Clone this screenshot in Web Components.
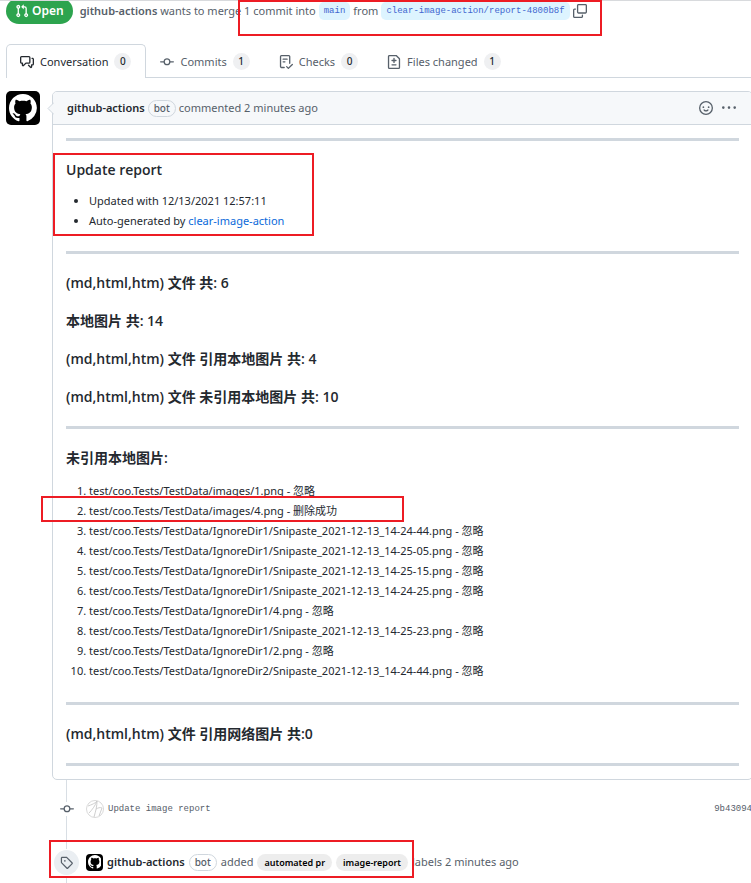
<!DOCTYPE html>
<html lang="en">
<head>
<meta charset="utf-8">
<title>Update image report</title>
<style>
  body {
    margin: 0;
    overflow-x: hidden;
    background: #fff;
    color: #24292f;
    font: 11px/18px "Noto Sans", "Noto Sans CJK SC", sans-serif;
  }
</style>
</head>
<body>
<pr-page></pr-page>
<script>
const ICONS = {
  pull: 'M7.177 3.073L9.573.677A.25.25 0 0110 .854v4.792a.25.25 0 01-.427.177L7.177 3.427a.25.25 0 010-.354zM3.75 2.5a.75.75 0 100 1.5.75.75 0 000-1.5zm-2.25.75a2.25 2.25 0 113 2.122v5.256a2.251 2.251 0 11-1.5 0V5.372A2.25 2.25 0 011.5 3.25zM11 2.5h-1V4h1a1 1 0 011 1v5.628a2.251 2.251 0 101.5 0V5A2.5 2.5 0 0011 2.5zm1 10.25a.75.75 0 111.5 0 .75.75 0 01-1.5 0zM3.75 12a.75.75 0 100 1.5.75.75 0 000-1.5z',
  talk: 'M1.5 2.75a.25.25 0 01.25-.25h8.5a.25.25 0 01.25.25v5.5a.25.25 0 01-.25.25h-3.5a.75.75 0 00-.53.22L3.5 11.44V9.25a.75.75 0 00-.75-.75h-1a.25.25 0 01-.25-.25v-5.5zM1.75 1A1.75 1.75 0 000 2.75v5.5C0 9.216.784 10 1.75 10H2v1.543a1.457 1.457 0 002.487 1.03L7.061 10h3.189A1.75 1.75 0 0012 8.25v-5.5A1.75 1.75 0 0010.25 1h-8.5zM14.5 4.75a.25.25 0 00-.25-.25h-.5a.75.75 0 110-1.5h.5c.966 0 1.75.784 1.75 1.75v5.5A1.75 1.75 0 0114.25 12H14v1.543a1.457 1.457 0 01-2.487 1.03L9.22 12.28a.75.75 0 111.06-1.06l2.22 2.22v-2.19a.75.75 0 01.75-.75h1a.25.25 0 00.25-.25v-5.5z',
  commit: 'M10.5 7.75a2.5 2.5 0 11-5 0 2.5 2.5 0 015 0zm1.43.75a4.002 4.002 0 01-7.86 0H.75a.75.75 0 110-1.5h3.32a4.001 4.001 0 017.86 0h3.32a.75.75 0 110 1.5h-3.32z',
  checks: 'M2.5 1.75a.25.25 0 01.25-.25h8.5a.25.25 0 01.25.25v7.736a.75.75 0 101.5 0V1.75A1.75 1.75 0 0011.25 0h-8.5A1.75 1.75 0 001 1.75v11.5c0 .966.784 1.75 1.75 1.75h3.17a.75.75 0 000-1.5H2.75a.25.25 0 01-.25-.25V1.75zM4.75 4a.75.75 0 000 1.5h4.5a.75.75 0 000-1.5h-4.5zM4 7.75A.75.75 0 014.75 7h2a.75.75 0 010 1.5h-2A.75.75 0 014 7.75zm11.774 3.537a.75.75 0 00-1.048-1.074L10.7 14.145 9.281 12.72a.75.75 0 00-1.062 1.058l1.943 1.95a.75.75 0 001.055.008l4.557-4.45z',
  diff: 'M2.75 1.5a.25.25 0 00-.25.25v12.5c0 .138.112.25.25.25h10.5a.25.25 0 00.25-.25V4.664a.25.25 0 00-.073-.177l-2.914-2.914a.25.25 0 00-.177-.073H2.75zM1 1.75C1 .784 1.784 0 2.75 0h7.586c.464 0 .909.184 1.237.513l2.914 2.914c.329.328.513.773.513 1.237v9.586A1.75 1.75 0 0113.25 16H2.75A1.75 1.75 0 011 14.25V1.75zm7 1.5a.75.75 0 01.75.75v1.5h1.5a.75.75 0 010 1.5h-1.5v1.5a.75.75 0 01-1.5 0V7h-1.5a.75.75 0 010-1.5h1.5V4A.75.75 0 018 3.25zm-3 8a.75.75 0 01.75-.75h4.5a.75.75 0 010 1.5h-4.5a.75.75 0 01-.75-.75z',
  smiley: 'M1.5 8a6.5 6.5 0 1113 0 6.5 6.5 0 01-13 0zM8 0a8 8 0 100 16A8 8 0 008 0zM5 8a1 1 0 100-2 1 1 0 000 2zm7-1a1 1 0 11-2 0 1 1 0 012 0zM5.32 9.636a.75.75 0 011.038.175c.103.118.227.231.357.319.264.178.683.37 1.285.37.602 0 1.02-.192 1.285-.371.13-.088.247-.192.35-.31a.75.75 0 111.229.862c-.06.08-.13.16-.2.23-.16.166-.338.316-.53.445-.63.418-1.37.638-2.127.629-.946 0-1.652-.308-2.126-.63a3.32 3.32 0 01-.73-.68.75.75 0 01.169-1.039z',
  dots: 'M8 9a1.5 1.5 0 100-3 1.5 1.5 0 000 3zM1.5 9a1.5 1.5 0 100-3 1.5 1.5 0 000 3zm13 0a1.5 1.5 0 100-3 1.5 1.5 0 000 3z',
  tag: 'M2.5 7.775V2.75a.25.25 0 01.25-.25h5.025a.25.25 0 01.177.073l6.25 6.25a.25.25 0 010 .354l-5.025 5.025a.25.25 0 01-.354 0l-6.25-6.25a.25.25 0 01-.073-.177zm-1.5 0V2.75C1 1.784 1.784 1 2.75 1h5.025c.464 0 .91.184 1.238.513l6.25 6.25a1.75 1.75 0 010 2.474l-5.026 5.026a1.75 1.75 0 01-2.474 0l-6.25-6.25A1.75 1.75 0 011 7.775zM6 5a1 1 0 100 2 1 1 0 000-2z',
  copy: 'M6.25 0C5.28 0 4.5.78 4.5 1.75v7.5c0 .97.78 1.75 1.75 1.75h8c.97 0 1.75-.78 1.75-1.75v-7.5C16 .78 15.22 0 14.25 0zm0 1.5h8a.25.25 0 01.25.25v7.5a.25.25 0 01-.25.25h-8A.25.25 0 016 9.25v-7.5a.25.25 0 01.25-.25zM1.75 5A1.75 1.75 0 000 6.75v7.5C0 15.22.78 16 1.75 16h8c.97 0 1.75-.78 1.75-1.75v-1.5a.75.75 0 00-1.5 0v1.5a.25.25 0 01-.25.25h-8a.25.25 0 01-.25-.25v-7.5a.25.25 0 01.25-.25h1a.75.75 0 000-1.5z',
  mark: 'M8 0C3.58 0 0 3.58 0 8c0 3.54 2.29 6.53 5.47 7.59.4.07.55-.17.55-.38 0-.19-.01-.82-.01-1.49-2.01.37-2.53-.49-2.69-.94-.09-.23-.48-.94-.82-1.13-.28-.15-.68-.52-.01-.53.63-.01 1.08.58 1.23.82.72 1.21 1.87.87 2.33.66.07-.52.28-.87.51-1.07-1.78-.2-3.64-.89-3.64-3.95 0-.87.31-1.59.82-2.15-.08-.2-.36-1.02.08-2.12 0 0 .67-.21 2.2.82.64-.18 1.32-.27 2-.27.68 0 1.36.09 2 .27 1.53-1.04 2.2-.82 2.2-.82.44 1.1.16 1.92.08 2.12.51.56.82 1.27.82 2.15 0 3.07-1.87 3.75-3.65 3.95.29.25.54.73.54 1.48 0 1.07-.01 1.93-.01 2.2 0 .21.15.46.55.38A8.013 8.013 0 0016 8c0-4.42-3.58-8-8-8z'
};

function define(name, html) {
  const t = document.createElement('template');
  t.innerHTML = html;
  customElements.define(name, class extends HTMLElement {
    constructor() {
      super();
      this.attachShadow({ mode: 'open' }).append(t.content.cloneNode(true));
    }
  });
}

class GlyphIcon extends HTMLElement {
  constructor() { super(); this.attachShadow({ mode: 'open' }); }
  connectedCallback() {
    this.shadowRoot.innerHTML = `<style>
      :host { display: block; flex: none; width: 14px; height: 14px; }
      svg { display: block; width: 100%; height: 100%; fill: currentColor; }
    </style><svg viewBox="0 0 16 16" aria-hidden="true"><path fill-rule="evenodd" d="${ICONS[this.getAttribute('name')]}"/></svg>`;
  }
}
customElements.define('glyph-icon', GlyphIcon);

define('cat-avatar', `<style>
  :host { display: flex; flex: none; align-items: center; justify-content: center; width: 34px; height: 34px; border-radius: 5px; background: #000; color: #fff; }
  glyph-icon { width: 82%; height: 82%; }
</style><glyph-icon name="mark"></glyph-icon>`);

/* Red outline laid over the part of the page it points out. */
define('red-mark', `<style>
  :host { position: absolute; z-index: 2; box-sizing: border-box; border: 2px solid #ed1c24; pointer-events: none; }
</style>`);

define('bot-badge', `<style>
  :host { display: block; flex: none; box-sizing: border-box; height: 17px; padding: 0 5px; border: 1px solid #d0d7de; border-radius: 9px; color: #57606a; font-size: 10px; font-weight: 500; line-height: 15px; }
</style><slot></slot>`);

define('branch-name', `<style>
  :host { display: block; flex: none; }
  a { display: block; padding: 0 5px; border-radius: 5px; background: #ddf4ff; color: #3f66cf; font: 9px/18px "Liberation Mono", monospace; text-decoration: none; }
</style><a href="#"><slot></slot></a>`);

define('pr-header', `<style>
  :host { display: flex; align-items: flex-end; position: relative; box-sizing: border-box; height: 24px; padding-left: 6px; border-top: 1px solid #d8dadd; color: #57606a; white-space: nowrap; }
  .clip { display: flex; align-items: flex-end; height: 23px; overflow: hidden; }
  .state { display: flex; align-items: center; gap: 3px; height: 26px; padding: 0 9px; border-radius: 13px; background: #2da44e; color: #fff; font-size: 12px; font-weight: 600; }
  .meta { display: flex; align-items: center; gap: 3px; height: 26px; margin-left: 7px; }
  b { font-weight: 600; }
  button { padding: 0; border: 0; background: none; color: #57606a; }
  red-mark { left: 238px; top: -1px; width: 364px; height: 36px; }
</style>
<div class="clip"><span class="state"><glyph-icon name="pull"></glyph-icon>Open</span></div>
<div class="meta"><span><b>github-actions</b> wants to merge 1 commit into</span>
<branch-name>main</branch-name><span>from</span><branch-name>clear-image-action/report-4800b8f</branch-name>
<button aria-label="Copy branch name"><glyph-icon name="copy"></glyph-icon></button></div>
<red-mark></red-mark>`);

class PrTab extends HTMLElement {
  constructor() { super(); this.attachShadow({ mode: 'open' }); }
  connectedCallback() {
    this.shadowRoot.innerHTML = `<style>
      :host { display: block; margin-bottom: -1px; }
      a { display: flex; align-items: center; gap: 6px; box-sizing: border-box; height: 34px; padding: 0 14px 0 13px; border: 1px solid transparent; border-bottom: 0; border-radius: 5px 5px 0 0; color: #57606a; text-decoration: none; white-space: nowrap; }
      :host([current]) a { border-color: #d0d7de; background: #fff; color: #24292f; }
      .count { min-width: 17px; height: 17px; border-radius: 9px; background: #eff0f2; color: #24292f; font-size: 10px; font-weight: 500; line-height: 17px; text-align: center; }
    </style><a href="#"><glyph-icon name="${this.getAttribute('icon')}"></glyph-icon><slot></slot><span class="count">${this.getAttribute('count')}</span></a>`;
  }
}
customElements.define('pr-tab', PrTab);

define('pr-tabs', `<style>
  :host { display: block; margin: 20px 0 13px 6px; }
  nav { display: flex; border-bottom: 1px solid #d0d7de; }
</style><nav>
<pr-tab icon="talk" count="0" current>Conversation</pr-tab>
<pr-tab icon="commit" count="1">Commits</pr-tab>
<pr-tab icon="checks" count="0">Checks</pr-tab>
<pr-tab icon="diff" count="1">Files changed</pr-tab>
</nav>`);

define('pr-comment', `<style>
  :host { display: flex; align-items: flex-start; gap: 12px; margin: 0 -2px 0 6px; }
  article { flex: 1; min-width: 0; position: relative; border: 1px solid #d0d7de; border-radius: 5px; background: #fff; }
  header { display: flex; align-items: center; gap: 3px; height: 32px; padding: 0 16px 0 14px; border-bottom: 1px solid #d0d7de; border-radius: 4px 4px 0 0; background: #f6f8fa; color: #57606a; }
  b { color: #24292f; font-weight: 600; }
  .tools { display: flex; align-items: center; gap: 9px; margin-left: auto; }
  button { padding: 0; border: 0; background: none; color: #57606a; }
  .beak { position: absolute; left: -6px; top: 10px; width: 7px; height: 13px; }
  .body { padding: 13px; }
</style>
<cat-avatar></cat-avatar>
<article>
<svg class="beak" viewBox="0 0 7 13" aria-hidden="true"><path d="M7 .5L1 6.5l6 6" fill="#f6f8fa" stroke="#d0d7de"/></svg>
<header><b>github-actions</b><bot-badge>bot</bot-badge><span>commented 2 minutes ago</span>
<div class="tools"><button aria-label="Add reaction"><glyph-icon name="smiley"></glyph-icon></button><button aria-label="More options"><glyph-icon name="dots"></glyph-icon></button></div></header>
<div class="body"><slot></slot></div>
</article>`);

const ignored = '忽略', snip = 'test/coo.Tests/TestData/IgnoreDir1/Snipaste_2021-12-13_';
const files = [
  ['test/coo.Tests/TestData/images/1.png', ignored],
  ['test/coo.Tests/TestData/images/4.png', '删除成功'],
  [snip + '14-24-44.png', ignored],
  [snip + '14-25-05.png', ignored],
  [snip + '14-25-15.png', ignored],
  [snip + '14-24-25.png', ignored],
  ['test/coo.Tests/TestData/IgnoreDir1/4.png', ignored],
  [snip + '14-25-23.png', ignored],
  ['test/coo.Tests/TestData/IgnoreDir1/2.png', ignored],
  ['test/coo.Tests/TestData/IgnoreDir2/Snipaste_2021-12-13_14-24-44.png', ignored]
];

define('image-report', `<style>
  :host { display: block; }
  hr { height: 3px; margin: 20px 0; border: 0; background: #d0d7de; }
  hr:first-of-type { margin-top: 0; }
  hr:last-of-type { margin-bottom: 0; }
  h3 { margin: 20px 0; font: 600 14px/18px "Open Sans", "Noto Sans CJK SC", sans-serif; }
  ul, ol { margin: -8px 0 20px; padding-left: 23px; line-height: 20px; }
  ol { margin: -6px 0 21px; }
  section { position: relative; }
  a { color: #0969da; text-decoration: none; }
  section red-mark { left: -13px; top: -8px; width: 261px; height: 83px; }
  .files red-mark { left: -25px; top: 47px; width: 363px; height: 26px; }
</style>
<hr>
<section><h3>Update report</h3>
<ul><li>Updated with 12/13/2021 12:57:11</li><li>Auto-generated by <a href="#">clear-image-action</a></li></ul>
<red-mark></red-mark></section>
<hr>
<h3>(md,html,htm) 文件 共: 6</h3>
<h3>本地图片 共: 14</h3>
<h3>(md,html,htm) 文件 引用本地图片 共: 4</h3>
<h3>(md,html,htm) 文件 未引用本地图片 共: 10</h3>
<hr>
<section class="files"><h3>未引用本地图片:</h3>
<ol>${files.map(([p, s]) => `<li>${p} - ${s}</li>`).join('')}</ol>
<red-mark></red-mark></section>
<hr>
<h3>(md,html,htm) 文件 引用网络图片 共:0</h3>
<hr>`);

define('pr-timeline', `<style>
  :host { display: block; position: relative; margin-left: 54px; padding: 16px 0 8px; background: linear-gradient(#d8dee4, #d8dee4) 12px 0 / 1px 100% no-repeat; color: #57606a; white-space: nowrap; }
  .row { display: flex; align-items: center; height: 26px; }
  .commit { margin-bottom: 27px; font: 9px/18px "Liberation Mono", monospace; }
  .badge { display: flex; flex: none; align-items: center; justify-content: center; width: 25px; height: 14px; margin-right: 7px; }
  .badge glyph-icon { background: #fff; }
  .tag { height: 25px; border-radius: 50%; background: #eaeef2; box-shadow: 0 0 0 1px #fff; }
  .tag glyph-icon { width: 13px; height: 13px; background: none; }
  .scribble { flex: none; width: 18px; height: 18px; margin-right: 4px; }
  a { color: inherit; text-decoration: none; }
  .sha { margin: 0 -1px 0 auto; }
  .event { gap: 4px; }
  .event .badge { margin-right: 3px; }
  cat-avatar { width: 17px; height: 17px; border-radius: 4px; }
  b { color: #24292f; font-weight: 600; }
  .label { padding: 0 7px; border-radius: 9px; background: #ededed; color: #000; font-size: 9px; font-weight: 600; line-height: 17px; }
  red-mark { left: -5px; bottom: 5px; width: 365px; height: 38px; }
</style>
<div class="row commit"><span class="badge"><glyph-icon name="commit"></glyph-icon></span>
<svg class="scribble" viewBox="0 0 18 18" fill="none" stroke="#c9c9c9" aria-hidden="true"><circle cx="9" cy="9" r="8.5" stroke="#d9d9d9"/><path d="M2 6c3-1 8-3 9-5C9 6 6 10 3 13M11 1c0 5-1 9-3 16M10 9c2-1 4-2 6-1-1 3-2 5-3 8" stroke-width=".9"/></svg>
<a href="#">Update image report</a><a class="sha" href="#">9b43094</a></div>
<div class="row event"><span class="badge tag"><glyph-icon name="tag"></glyph-icon></span>
<cat-avatar></cat-avatar><b>github-actions</b><bot-badge>bot</bot-badge><span>added</span><a class="label" href="#">automated pr</a><a class="label" href="#">image-report</a><span>labels 2 minutes ago</span></div>
<red-mark></red-mark>`);

define('pr-page', `<style>:host { display: block; }</style>
<pr-header></pr-header>
<pr-tabs></pr-tabs>
<pr-comment><image-report></image-report></pr-comment>
<pr-timeline></pr-timeline>`);
</script>
</body>
</html>
